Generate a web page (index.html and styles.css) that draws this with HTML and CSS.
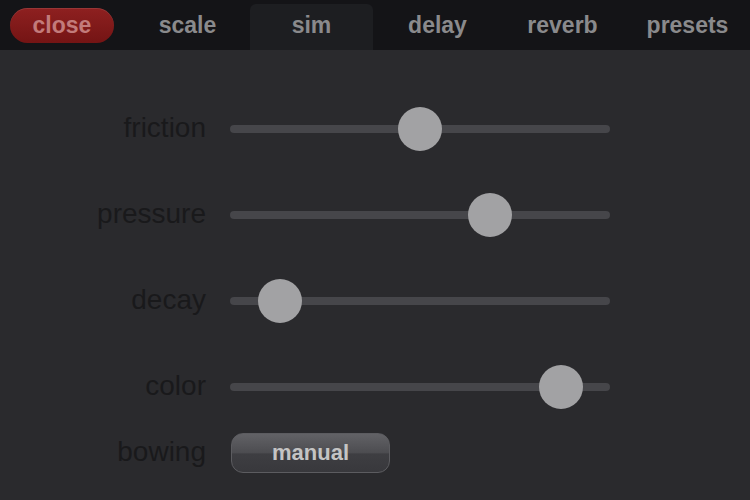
FILE: index.html
```html
<!DOCTYPE html>
<html lang="en">
<head>
  <meta charset="UTF-8">
  <title>sim</title>
  <link rel="stylesheet" href="styles.css">
</head>
<body>
  <nav class="tabbar">
    <div class="tab"><button class="close-btn">close</button></div>
    <div class="tab">scale</div>
    <div class="tab active">sim</div>
    <div class="tab">delay</div>
    <div class="tab">reverb</div>
    <div class="tab">presets</div>
  </nav>

  <main class="panel">
    <div class="row">
      <span class="label">friction</span>
      <div class="track"><span class="knob" style="left: 50%"></span></div>
    </div>
    <div class="row">
      <span class="label">pressure</span>
      <div class="track"><span class="knob" style="left: 68.4%"></span></div>
    </div>
    <div class="row">
      <span class="label">decay</span>
      <div class="track"><span class="knob" style="left: 13.2%"></span></div>
    </div>
    <div class="row">
      <span class="label">color</span>
      <div class="track"><span class="knob" style="left: 87.1%"></span></div>
    </div>
    <div class="row short">
      <span class="label">bowing</span>
      <div><button class="toggle">manual</button></div>
    </div>
  </main>
</body>
</html>
```

FILE: styles.css
```css
html, body {
  margin: 0;
  padding: 0;
  height: 100%;
}

body {
  font-family: "Liberation Sans", Arial, sans-serif;
  background-color: #2a2a2d;
  overflow: hidden;
}

/* top tab bar */
.tabbar {
  display: flex;
  height: 50px;
  background-color: #141417;
}

.tab {
  width: 125px;
  display: flex;
  align-items: center;
  justify-content: center;
  font-size: 23px;
  font-weight: bold;
  color: #8a8a8c;
}

.tab:first-child {
  justify-content: flex-start;
}

.tab.active {
  margin: 4px 2px 0 0;
  width: 123px;
  border-radius: 6px 6px 0 0;
  background-color: #1d1e21;
  padding-bottom: 4px;
  box-sizing: border-box;
}

.close-btn {
  margin-left: 10px;
  width: 104px;
  height: 35px;
  border: none;
  border-radius: 18px;
  background: linear-gradient(#8e2020, #741414);
  box-shadow: inset 0 1px 0 rgba(255, 255, 255, 0.1);
  color: #c27b7b;
  font-family: inherit;
  font-size: 23px;
  font-weight: bold;
  padding: 0;
}

/* slider rows */
.panel {
  padding-top: 36px;
}

.row {
  display: grid;
  grid-template-columns: 206px 380px;
  column-gap: 24px;
  align-items: center;
  height: 86px;
}

.row.short {
  height: 46px;
}

.label {
  text-align: right;
  font-size: 28px;
  color: #19191b;
  margin-bottom: 3px;
}

.track {
  position: relative;
  height: 8px;
  border-radius: 4px;
  background-color: #46464a;
}

.knob {
  position: absolute;
  top: 50%;
  width: 44px;
  height: 44px;
  margin: -22px 0 0 -22px;
  border-radius: 50%;
  background-color: #a2a2a4;
}

.toggle {
  margin-left: 1px;
  width: 159px;
  height: 40px;
  border: 1px solid #5c5c60;
  border-radius: 12px;
  background: linear-gradient(#626266 0%, #4c4c50 50%, #3e3e42 52%, #38383c 100%);
  color: #c4c4c4;
  font-family: inherit;
  font-size: 22px;
  font-weight: bold;
  padding: 0;
}
```
